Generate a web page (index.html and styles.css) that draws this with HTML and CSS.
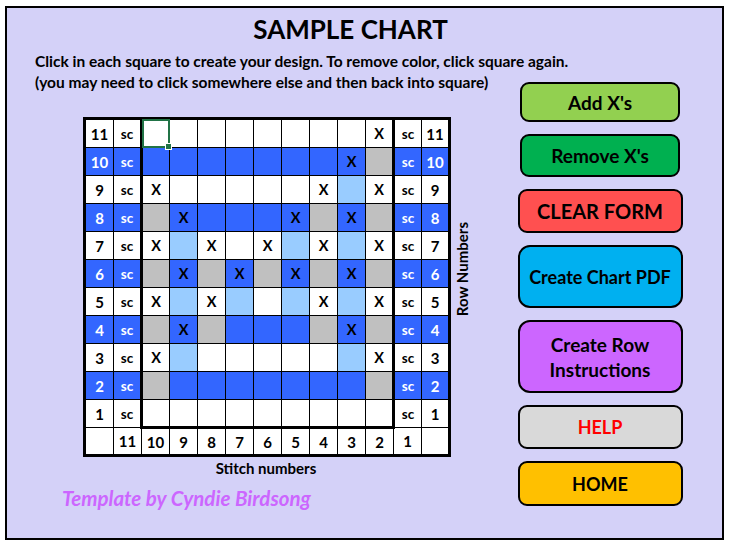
FILE: index.html
```html
<!DOCTYPE html>
<html lang="en">
<head>
    <meta charset="UTF-8">
    <meta name="viewport" content="width=device-width, initial-scale=1.0">
    <title>Sample Chart</title>
    <link rel="stylesheet" href="styles.css">
</head>
<body>
    <div class="sheet">
        <h1 class="title">SAMPLE CHART</h1>

        <div class="content">
            <div class="left">
                <p class="instructions">
                    Click in each square to create your design. To remove color, click square again.<br>
                    (you may need to click somewhere else and then back into square)
                </p>

                <div class="chart-area">
                    <table class="chart">
                        <tr>
                            <td class="num">11</td><td class="sc">sc</td>
                            <td class="first selected"></td><td></td><td></td><td></td><td></td><td></td><td></td><td></td><td class="last">X</td>
                            <td class="sc">sc</td><td class="num">11</td>
                        </tr>
                        <tr class="blue-row">
                            <td class="num">10</td><td class="sc">sc</td>
                            <td class="first b"></td><td class="b"></td><td class="b"></td><td class="b"></td><td class="b"></td><td class="b"></td><td class="b"></td><td class="b">X</td><td class="last g"></td>
                            <td class="sc">sc</td><td class="num">10</td>
                        </tr>
                        <tr>
                            <td class="num">9</td><td class="sc">sc</td>
                            <td class="first">X</td><td></td><td></td><td></td><td></td><td></td><td>X</td><td class="l"></td><td class="last">X</td>
                            <td class="sc">sc</td><td class="num">9</td>
                        </tr>
                        <tr class="blue-row">
                            <td class="num">8</td><td class="sc">sc</td>
                            <td class="first g"></td><td class="b">X</td><td class="b"></td><td class="b"></td><td class="b"></td><td class="b">X</td><td class="g"></td><td class="b">X</td><td class="last g"></td>
                            <td class="sc">sc</td><td class="num">8</td>
                        </tr>
                        <tr>
                            <td class="num">7</td><td class="sc">sc</td>
                            <td class="first">X</td><td class="l"></td><td>X</td><td></td><td>X</td><td class="l"></td><td>X</td><td class="l"></td><td class="last">X</td>
                            <td class="sc">sc</td><td class="num">7</td>
                        </tr>
                        <tr class="blue-row">
                            <td class="num">6</td><td class="sc">sc</td>
                            <td class="first g"></td><td class="b">X</td><td class="g"></td><td class="b">X</td><td class="g"></td><td class="b">X</td><td class="g"></td><td class="b">X</td><td class="last g"></td>
                            <td class="sc">sc</td><td class="num">6</td>
                        </tr>
                        <tr>
                            <td class="num">5</td><td class="sc">sc</td>
                            <td class="first">X</td><td class="l"></td><td>X</td><td class="l"></td><td></td><td class="l"></td><td>X</td><td class="l"></td><td class="last">X</td>
                            <td class="sc">sc</td><td class="num">5</td>
                        </tr>
                        <tr class="blue-row">
                            <td class="num">4</td><td class="sc">sc</td>
                            <td class="first g"></td><td class="b">X</td><td class="g"></td><td class="b"></td><td class="b"></td><td class="b"></td><td class="g"></td><td class="b">X</td><td class="last g"></td>
                            <td class="sc">sc</td><td class="num">4</td>
                        </tr>
                        <tr>
                            <td class="num">3</td><td class="sc">sc</td>
                            <td class="first">X</td><td class="l"></td><td></td><td></td><td></td><td></td><td></td><td class="l"></td><td class="last">X</td>
                            <td class="sc">sc</td><td class="num">3</td>
                        </tr>
                        <tr class="blue-row">
                            <td class="num">2</td><td class="sc">sc</td>
                            <td class="first g"></td><td class="b"></td><td class="b"></td><td class="b"></td><td class="b"></td><td class="b"></td><td class="b"></td><td class="b"></td><td class="last g"></td>
                            <td class="sc">sc</td><td class="num">2</td>
                        </tr>
                        <tr class="bottom-row">
                            <td class="num">1</td><td class="sc">sc</td>
                            <td class="first"></td><td></td><td></td><td></td><td></td><td></td><td></td><td></td><td class="last"></td>
                            <td class="sc">sc</td><td class="num">1</td>
                        </tr>
                        <tr class="stitch-row">
                            <td></td><td>11</td><td>10</td><td>9</td><td>8</td><td>7</td><td>6</td><td>5</td><td>4</td><td>3</td><td>2</td><td>1</td><td></td>
                        </tr>
                    </table>

                    <div class="row-label">
                        <span>Row Numbers</span>
                    </div>
                </div>

                <p class="stitch-label">Stitch numbers</p>
                <p class="credit">Template by Cyndie Birdsong</p>
            </div>

            <div class="buttons">
                <button class="btn add">Add X's</button>
                <button class="btn remove">Remove X's</button>
                <button class="btn clear">CLEAR FORM</button>
                <button class="btn pdf">Create Chart PDF</button>
                <button class="btn rows">Create Row<br>Instructions</button>
                <button class="btn help">HELP</button>
                <button class="btn home">HOME</button>
            </div>
        </div>
    </div>
</body>
</html>
```

FILE: styles.css
```css
body {
    margin: 0;
    background: white;
    font-family: "Lato", "Open Sans", sans-serif;
    font-weight: bold;
    color: black;
}

.sheet {
    box-sizing: border-box;
    width: 719px;
    height: 534px;
    margin: 6px 0 0 5px;
    border: 2px solid black;
    background-color: #d4d1f8;
}

.title {
    margin: 0;
    padding: 5px 28px 0 0;
    text-align: center;
    font-size: 26px;
    line-height: 32px;
}

.content {
    display: flex;
}

.left {
    width: 482px;
    padding-left: 28px;
}

.instructions {
    margin: 6px 0 0 0;
    font-size: 15.5px;
    line-height: 21px;
    white-space: nowrap;
}

.chart-area {
    display: flex;
    align-items: flex-start;
    margin: 24px 0 0 48px;
}

/* the chart grid */
.chart {
    border-collapse: collapse;
    border: 3px solid black;
    background: white;
}

.chart td {
    width: 26px;
    height: 27px;
    padding: 0;
    border: 1px solid black;
    text-align: center;
    font-size: 14.5px;
}

.chart td:nth-child(n+4):nth-child(-n+10),
.chart td:first-child {
    width: 27px;
}

.chart td.first {
    border-left: 3px solid black;
}

.chart td.last {
    border-right: 3px solid black;
}

.chart .bottom-row td {
    height: 26px;
}

.chart .bottom-row td.first,
.chart .bottom-row td.last,
.chart .bottom-row td.first ~ td:not(.sc):not(.num) {
    border-bottom: 3px solid black;
}

.chart td.num {
    font-size: 15px;
}

.chart td.sc {
    font-size: 13.5px;
}

.blue-row td.num,
.blue-row td.sc {
    background-color: #3366ff;
    color: white;
}

.chart td.b {
    background-color: #3366ff;
}

.chart td.l {
    background-color: #99ccff;
}

.chart td.g {
    background-color: #c0c0c0;
}

.chart td.selected {
    position: relative;
    outline: 2px solid #217346;
    outline-offset: -2px;
}

.chart td.selected::after {
    content: "";
    position: absolute;
    right: -3px;
    bottom: -3px;
    width: 5px;
    height: 5px;
    background: #217346;
    border: 1px solid white;
}

.chart .stitch-row td {
    height: 25px;
    font-size: 15px;
}

.row-label {
    display: flex;
    align-items: center;
    height: 304px;
    margin-left: 2px;
}

.row-label span {
    writing-mode: vertical-rl;
    transform: rotate(180deg);
    font-size: 15px;
}

.stitch-label {
    margin: 2px 0 0 48px;
    width: 366px;
    text-align: center;
    font-size: 15px;
    line-height: 18px;
}

.credit {
    margin: 9px 0 0 27px;
    font-size: 20.5px;
    line-height: 24px;
    font-style: italic;
    color: #cc66ff;
}

/* buttons on the right */
.buttons {
    display: flex;
    flex-direction: column;
    align-items: center;
    gap: 12px;
    width: 166px;
    margin-top: 37px;
}

.btn {
    box-sizing: border-box;
    width: 165px;
    border: 2px solid black;
    border-radius: 9px;
    font-family: inherit;
    font-weight: bold;
    font-size: 19px;
    color: black;
    padding: 0;
}

.add {
    width: 160px;
    height: 40px;
    background-color: #92d050;
}

.remove {
    width: 160px;
    height: 43px;
    background-color: #00b050;
}

.clear {
    height: 44px;
    font-size: 20px;
    background-color: #ff5050;
}

.pdf {
    height: 63px;
    font-size: 18px;
    background-color: #00b0f0;
    border-radius: 12px;
}

.rows {
    height: 73px;
    line-height: 25px;
    background-color: #cc66ff;
    border-radius: 12px;
}

.help {
    height: 44px;
    font-size: 18px;
    color: #ff0000;
    background-color: #d9d9d9;
}

.home {
    height: 45px;
    font-size: 18px;
    background-color: #ffc000;
}
```
